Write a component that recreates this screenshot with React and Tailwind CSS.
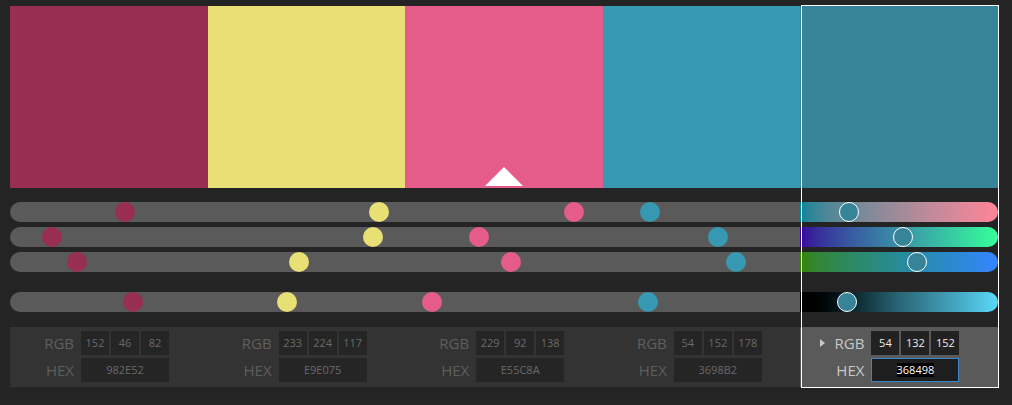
const COLORS = [
  { hex: '982E52', rgb: [152, 46, 82] },
  { hex: 'E9E075', rgb: [233, 224, 117] },
  { hex: 'E55C8A', rgb: [229, 92, 138] },
  { hex: '3698B2', rgb: [54, 152, 178] },
  { hex: '368498', rgb: [54, 132, 152] },
]

// thumb centres (px from track start) for the four unselected swatches
const ROWS = [
  { pos: [115, 369, 564, 640], sel: 839, grad: 'bg-gradient-to-r from-[#008498] to-[#ff8498]' },
  { pos: [42, 363, 469, 708], sel: 893, grad: 'bg-gradient-to-r from-[#360098] to-[#36ff98]' },
  { pos: [67, 289, 501, 726], sel: 907, grad: 'bg-gradient-to-r from-[#368400] to-[#3684ff]' },
  { pos: [123, 277, 422, 638], sel: 837, grad: 'bg-gradient-to-r from-[#000000] via-[#2a6677] to-[#5ad9fa]', gap: true },
]

function SliderRow({ row }) {
  return (
    <div className={`relative flex h-5 ${row.gap ? 'mt-5' : 'mt-[5px]'}`}>
      <div className="w-[790px] h-full rounded-l-full bg-[#5a5a5a]" />
      <div className={`flex-1 h-full rounded-r-full ${row.grad}`} />
      {row.pos.map((x, i) => (
        <div
          key={i}
          className="absolute top-0 w-5 h-5 -ml-[10px] rounded-full"
          style={{ left: x, backgroundColor: '#' + COLORS[i].hex }}
        />
      ))}
      <div
        className="absolute top-0 w-5 h-5 -ml-[10px] rounded-full border-[1.5px] border-white bg-[#368498]"
        style={{ left: row.sel }}
      />
    </div>
  )
}

function ValueCell({ color, selected }) {
  const label = selected ? 'text-[#c8c8c8]' : 'text-[#5e5e5e]'
  const box = selected
    ? 'bg-[#222222] text-[#ececec]'
    : 'bg-[#252525] text-[#6a6a6a]'
  return (
    <div className={`flex flex-col gap-[3px] pt-1 pb-[5px] ${selected ? 'bg-[#5a5a5a]' : ''}`}>
      <div className="flex items-center h-6">
        <div className={`relative w-[64px] text-right text-[15px] leading-none ${label}`}>
          {selected && (
            <span className="absolute left-[20px] top-[3px] w-0 h-0 border-y-[4px] border-y-transparent border-l-[5px] border-l-[#c8c8c8]" />
          )}
          RGB
        </div>
        <div className="flex gap-[2px] ml-[7px]">
          {color.rgb.map((v, i) => (
            <div key={i} className={`w-[28px] h-6 flex items-center justify-center text-[11px] ${box}`}>
              {v}
            </div>
          ))}
        </div>
      </div>
      <div className="flex items-center h-6">
        <div className={`w-[64px] text-right text-[15px] leading-none ${label}`}>HEX</div>
        {selected ? (
          <div className="ml-[7px] w-[88px] h-6 flex items-center justify-center border border-[#3d86c6] bg-[#1e1e1e]">
            <span className="bg-black text-white text-[11px] leading-[14px]">{color.hex}</span>
          </div>
        ) : (
          <div className={`ml-[7px] w-[88px] h-6 flex items-center justify-center text-[11px] ${box}`}>
            {color.hex}
          </div>
        )}
      </div>
    </div>
  )
}

export default function App() {
  return (
    <div
      className="w-[1012px] h-[405px] bg-[#242424] overflow-hidden"
      style={{ fontFamily: '"Open Sans", "Liberation Sans", sans-serif' }}
    >
      <div className="relative w-[988px] ml-[10px] pt-[6px]">
        {/* swatches */}
        <div className="grid grid-cols-5 h-[182px]">
          {COLORS.map((c, i) => (
            <div key={c.hex} className="relative flex justify-center items-end pb-[2px]" style={{ backgroundColor: '#' + c.hex }}>
              {i === 2 && (
                <div className="w-0 h-0 border-x-[19px] border-x-transparent border-b-[19px] border-b-white" />
              )}
            </div>
          ))}
        </div>

        {/* sliders */}
        <div className="pt-[9px]">
          {ROWS.map((r, i) => (
            <SliderRow key={i} row={r} />
          ))}
        </div>

        {/* values */}
        <div className="grid grid-cols-5 mt-[15px] bg-[#333333]">
          {COLORS.map((c, i) => (
            <ValueCell key={c.hex} color={c} selected={i === 4} />
          ))}
        </div>

        {/* selection frame */}
        <div className="absolute left-[791px] top-[5px] w-[198px] h-[383px] border border-white pointer-events-none" />
      </div>
    </div>
  )
}
